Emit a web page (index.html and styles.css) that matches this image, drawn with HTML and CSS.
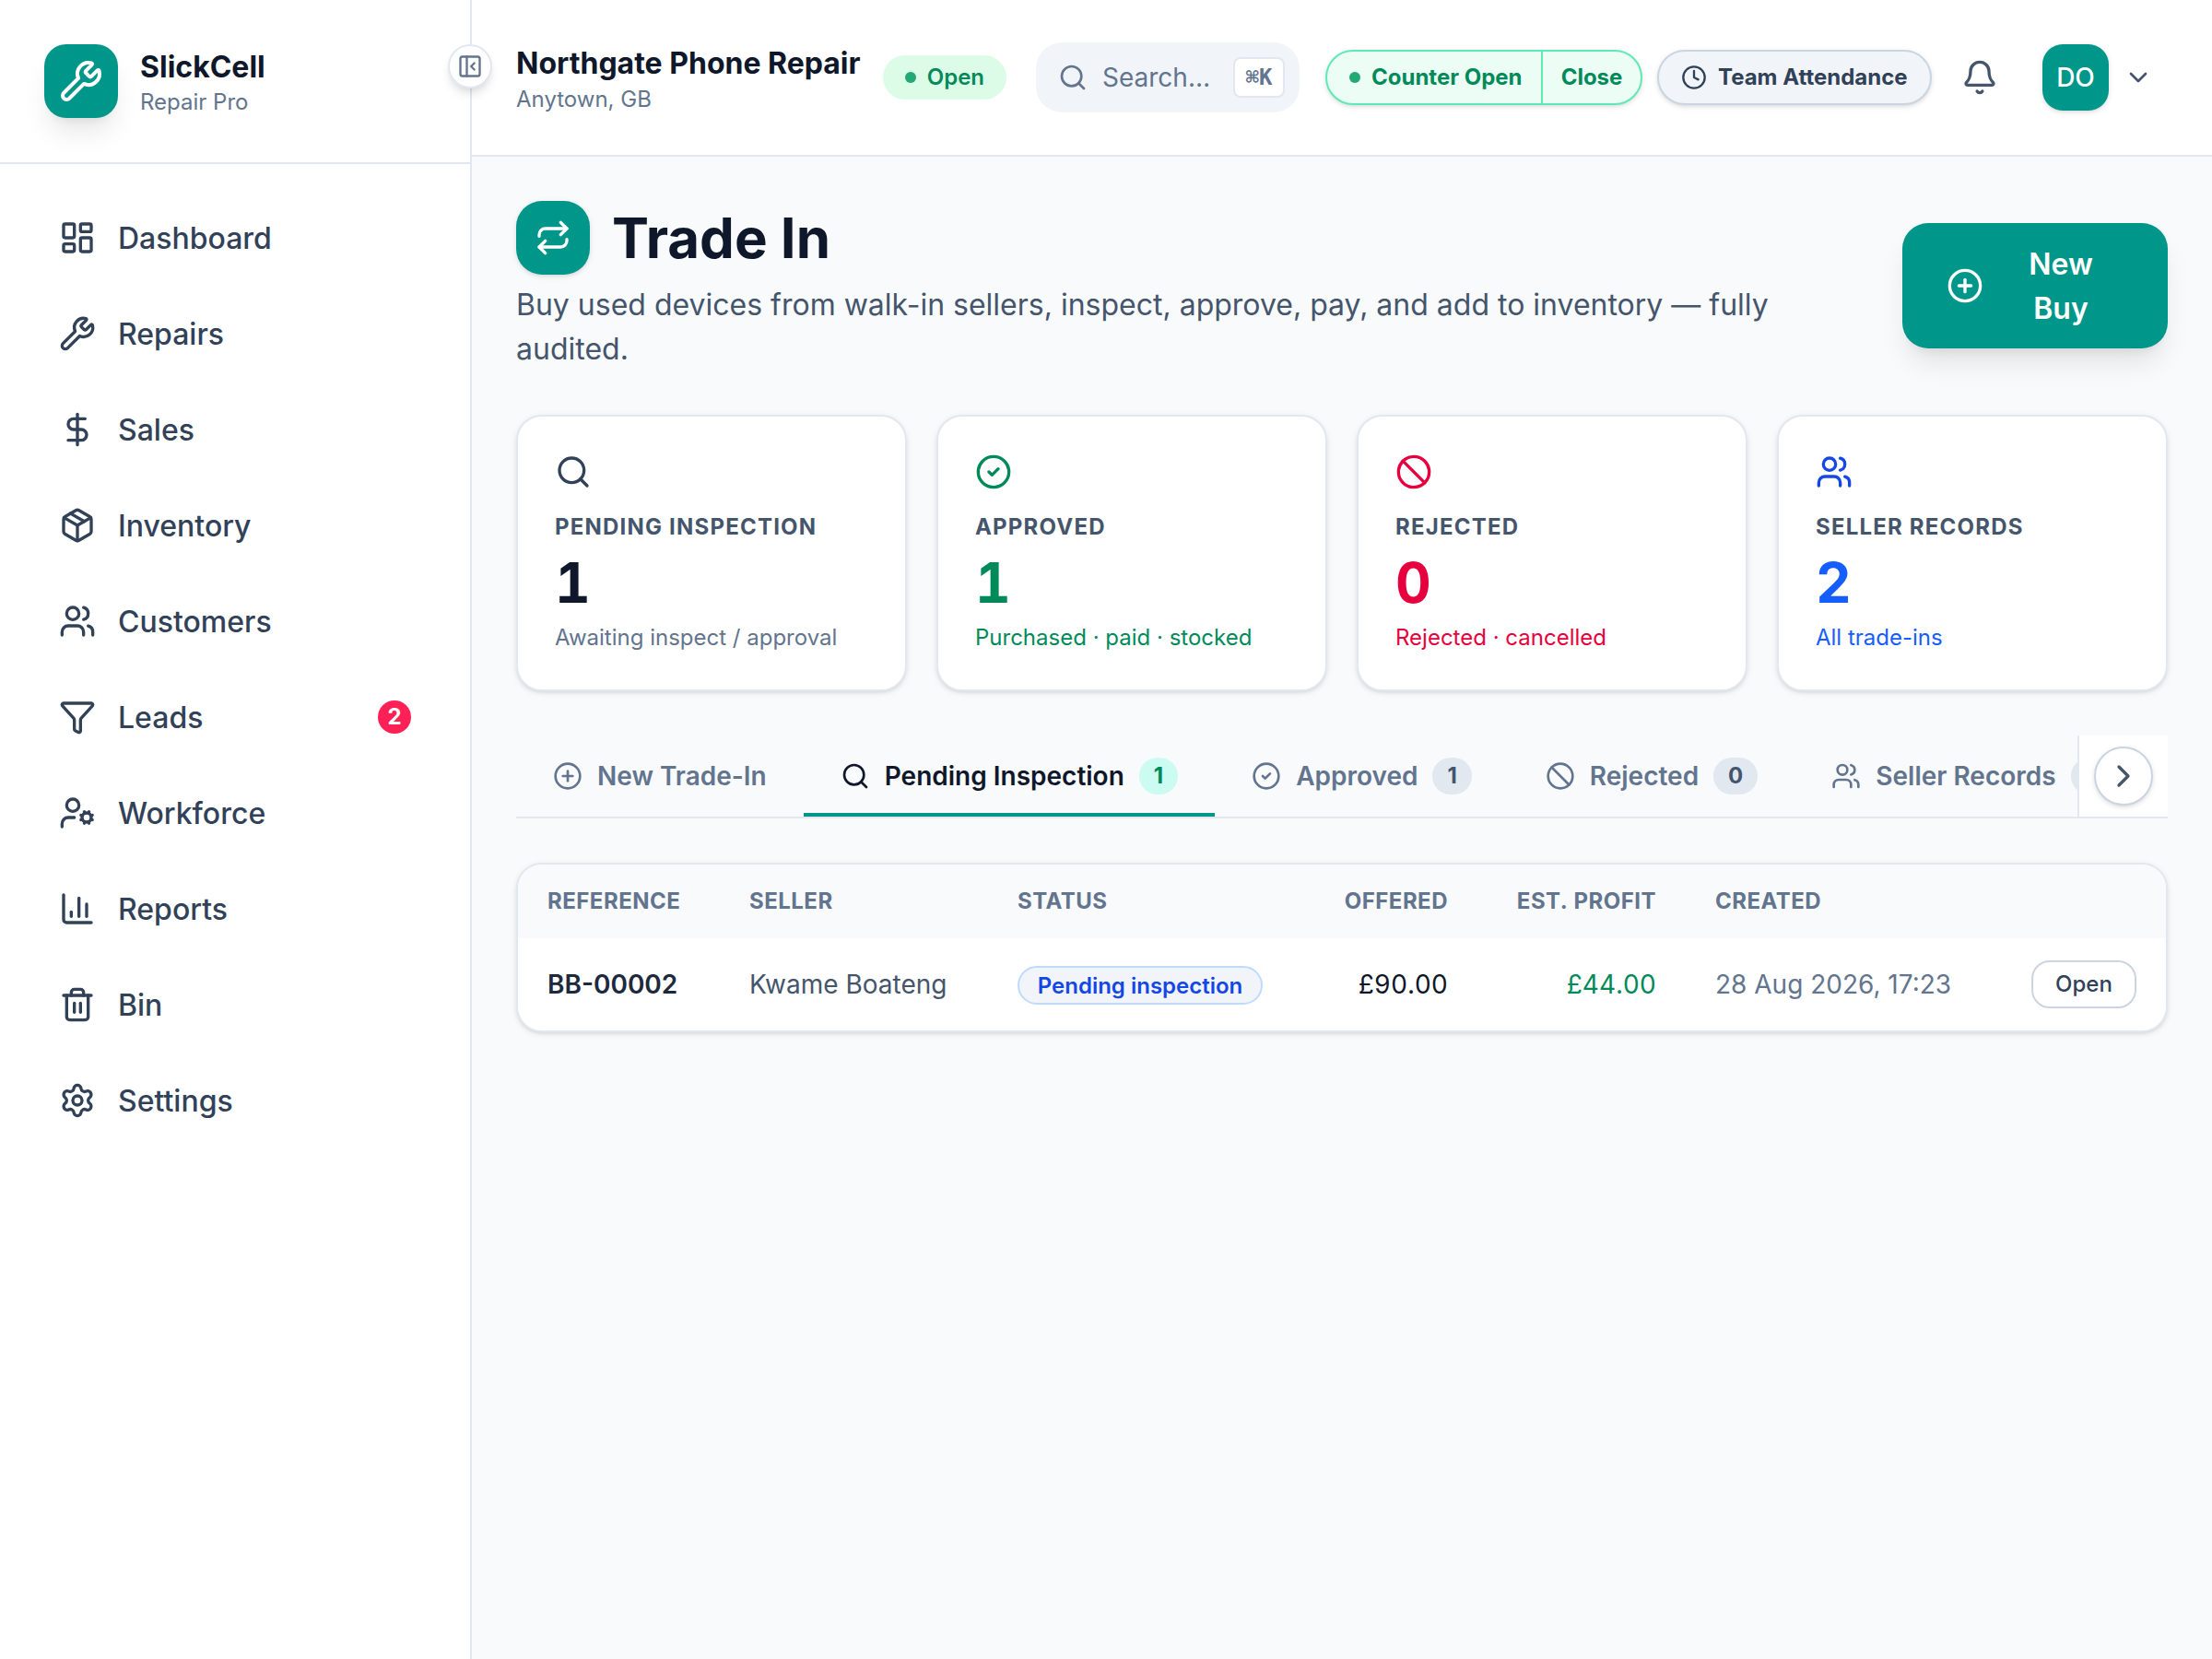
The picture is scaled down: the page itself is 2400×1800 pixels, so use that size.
FILE: index.html
```html
<!DOCTYPE html>
<html lang="en">
<head>
  <meta charset="UTF-8" />
  <meta name="viewport" content="width=device-width, initial-scale=1.0"/>
  <title>Trade In - SlickCell</title>
  <link rel="stylesheet" href="styles.css">
</head>
<body>
  <svg width="0" height="0" class="sprite">
    <symbol id="i-wrench" viewBox="0 0 24 24"><path d="M14.7 6.3a1 1 0 0 0 0 1.4l1.6 1.6a1 1 0 0 0 1.4 0l3.106-3.105c.32-.322.863-.22.983.218a6 6 0 0 1-8.259 7.057l-7.91 7.91a1 1 0 0 1-2.999-3l7.91-7.91a6 6 0 0 1 7.057-8.259c.438.12.54.662.219.984z"/></symbol>
    <symbol id="i-search" viewBox="0 0 24 24"><circle cx="11" cy="11" r="8"/><path d="m21 21-4.34-4.34"/></symbol>
    <symbol id="i-users" viewBox="0 0 24 24"><path d="M16 21v-2a4 4 0 0 0-4-4H6a4 4 0 0 0-4 4v2"/><path d="M16 3.128a4 4 0 0 1 0 7.744"/><path d="M22 21v-2a4 4 0 0 0-3-3.87"/><circle cx="9" cy="7" r="4"/></symbol>
    <symbol id="i-check" viewBox="0 0 24 24"><circle cx="12" cy="12" r="10"/><path d="m9 12 2 2 4-4"/></symbol>
    <symbol id="i-ban" viewBox="0 0 24 24"><circle cx="12" cy="12" r="10"/><path d="m4.9 4.9 14.2 14.2"/></symbol>
    <symbol id="i-plus" viewBox="0 0 24 24"><circle cx="12" cy="12" r="10"/><path d="M8 12h8"/><path d="M12 8v8"/></symbol>
  </svg>

  <div class="app">
    <aside class="sidebar">
      <div class="brand">
        <div class="brand-logo"><svg class="icon icon-lg"><use href="#i-wrench"/></svg></div>
        <div class="brand-text">
          <div class="brand-name">SlickCell</div>
          <div class="brand-sub">Repair Pro</div>
        </div>
      </div>
      <button class="collapse">
        <svg class="icon" viewBox="0 0 24 24"><rect width="18" height="18" x="3" y="3" rx="2"/><path d="M9 3v18"/><path d="m16 15-3-3 3-3"/></svg>
      </button>
      <nav class="nav">
        <a class="nav-item">
          <svg class="icon" viewBox="0 0 24 24"><rect width="7" height="9" x="3" y="3" rx="1"/><rect width="7" height="5" x="14" y="3" rx="1"/><rect width="7" height="9" x="14" y="12" rx="1"/><rect width="7" height="5" x="3" y="16" rx="1"/></svg>
          <span class="nav-label">Dashboard</span>
        </a>
        <a class="nav-item">
          <svg class="icon"><use href="#i-wrench"/></svg>
          <span class="nav-label">Repairs</span>
        </a>
        <a class="nav-item">
          <svg class="icon" viewBox="0 0 24 24"><path d="M12 2v20"/><path d="M17 5H9.5a3.5 3.5 0 0 0 0 7h5a3.5 3.5 0 0 1 0 7H6"/></svg>
          <span class="nav-label">Sales</span>
        </a>
        <a class="nav-item">
          <svg class="icon" viewBox="0 0 24 24"><path d="M11 21.73a2 2 0 0 0 2 0l7-4A2 2 0 0 0 21 16V8a2 2 0 0 0-1-1.73l-7-4a2 2 0 0 0-2 0l-7 4A2 2 0 0 0 3 8v8a2 2 0 0 0 1 1.73z"/><path d="M12 22V12"/><path d="M3.29 7 12 12l8.71-5"/><path d="m7.5 4.27 9 5.15"/></svg>
          <span class="nav-label">Inventory</span>
        </a>
        <a class="nav-item">
          <svg class="icon"><use href="#i-users"/></svg>
          <span class="nav-label">Customers</span>
        </a>
        <a class="nav-item">
          <svg class="icon" viewBox="0 0 24 24"><path d="M10 20a1 1 0 0 0 .553.895l2 1A1 1 0 0 0 14 21v-7a2 2 0 0 1 .517-1.341L21.74 4.67A1 1 0 0 0 21 3H3a1 1 0 0 0-.742 1.67l7.225 7.989A2 2 0 0 1 10 14z"/></svg>
          <span class="nav-label">Leads</span>
          <span class="nav-badge">2</span>
        </a>
        <a class="nav-item">
          <svg class="icon" viewBox="0 0 24 24"><path d="M10 15H6a4 4 0 0 0-4 4v2"/><path d="m14.305 16.53.923-.382"/><path d="m15.228 13.852-.923-.383"/><path d="m16.852 12.228-.383-.923"/><path d="m16.852 17.772-.383.924"/><path d="m19.148 12.228.383-.923"/><path d="m19.53 18.696-.382-.924"/><path d="m20.772 13.852.924-.383"/><path d="m20.772 16.148.924.383"/><circle cx="18" cy="15" r="3"/><circle cx="9" cy="7" r="4"/></svg>
          <span class="nav-label">Workforce</span>
        </a>
        <a class="nav-item">
          <svg class="icon" viewBox="0 0 24 24"><path d="M3 3v16a2 2 0 0 0 2 2h16"/><path d="M18 17V9"/><path d="M13 17V5"/><path d="M8 17v-3"/></svg>
          <span class="nav-label">Reports</span>
        </a>
        <a class="nav-item">
          <svg class="icon" viewBox="0 0 24 24"><path d="M10 11v6"/><path d="M14 11v6"/><path d="M19 6v14a2 2 0 0 1-2 2H7a2 2 0 0 1-2-2V6"/><path d="M3 6h18"/><path d="M8 6V4a2 2 0 0 1 2-2h4a2 2 0 0 1 2 2v2"/></svg>
          <span class="nav-label">Bin</span>
        </a>
        <a class="nav-item">
          <svg class="icon" viewBox="0 0 24 24"><path d="M9.671 4.136a2.34 2.34 0 0 1 4.659 0 2.34 2.34 0 0 0 3.319 1.915 2.34 2.34 0 0 1 2.33 4.033 2.34 2.34 0 0 0 0 3.831 2.34 2.34 0 0 1-2.33 4.033 2.34 2.34 0 0 0-3.319 1.915 2.34 2.34 0 0 1-4.659 0 2.34 2.34 0 0 0-3.32-1.915 2.34 2.34 0 0 1-2.33-4.033 2.34 2.34 0 0 0 0-3.831A2.34 2.34 0 0 1 6.35 6.051a2.34 2.34 0 0 0 3.319-1.915"/><circle cx="12" cy="12" r="3"/></svg>
          <span class="nav-label">Settings</span>
        </a>
      </nav>
    </aside>

    <div class="content">
      <header class="topbar">
        <div class="shop">
          <div class="shop-name">Northgate Phone Repair</div>
          <div class="shop-place">Anytown, GB</div>
        </div>
        <span class="open-pill"><i class="dot"></i>Open</span>
        <button class="search">
          <svg class="icon icon-sm"><use href="#i-search"/></svg>
          <span class="search-text">Search…</span>
          <kbd>⌘K</kbd>
        </button>
        <div class="counter">
          <span class="counter-state"><i class="dot"></i>Counter Open</span>
          <button class="counter-close">Close</button>
        </div>
        <button class="attendance">
          <svg class="icon" viewBox="0 0 24 24"><circle cx="12" cy="12" r="10"/><path d="M12 6v6l4 2"/></svg>
          Team Attendance
        </button>
        <button class="bell">
          <svg class="icon" viewBox="0 0 24 24"><path d="M10.268 21a2 2 0 0 0 3.464 0"/><path d="M3.262 15.326A1 1 0 0 0 4 17h16a1 1 0 0 0 .74-1.673C19.41 13.956 18 12.499 18 8A6 6 0 0 0 6 8c0 4.499-1.411 5.956-2.738 7.326"/></svg>
        </button>
        <button class="account">
          <span class="avatar">DO</span>
          <svg class="icon icon-sm" viewBox="0 0 24 24"><path d="m6 9 6 6 6-6"/></svg>
        </button>
      </header>

      <main class="main">
        <section class="page-head">
          <div class="page-intro">
            <div class="page-title">
              <div class="page-icon">
                <svg class="icon" viewBox="0 0 24 24"><path d="m17 2 4 4-4 4"/><path d="M3 11v-1a4 4 0 0 1 4-4h14"/><path d="m7 22-4-4 4-4"/><path d="M21 13v1a4 4 0 0 1-4 4H3"/></svg>
              </div>
              <h1>Trade In</h1>
            </div>
            <p>Buy used devices from walk-in sellers, inspect, approve, pay, and add to inventory — fully audited.</p>
          </div>
          <button class="new-buy">
            <svg class="icon"><use href="#i-plus"/></svg>
            <span>New Buy</span>
          </button>
        </section>

        <section class="stats">
          <div class="card">
            <svg class="icon"><use href="#i-search"/></svg>
            <div class="card-label">Pending Inspection</div>
            <div class="card-value">1</div>
            <div class="card-note">Awaiting inspect / approval</div>
          </div>
          <div class="card card-green">
            <svg class="icon"><use href="#i-check"/></svg>
            <div class="card-label">Approved</div>
            <div class="card-value">1</div>
            <div class="card-note">Purchased · paid · stocked</div>
          </div>
          <div class="card card-red">
            <svg class="icon"><use href="#i-ban"/></svg>
            <div class="card-label">Rejected</div>
            <div class="card-value">0</div>
            <div class="card-note">Rejected · cancelled</div>
          </div>
          <div class="card card-blue">
            <svg class="icon"><use href="#i-users"/></svg>
            <div class="card-label">Seller Records</div>
            <div class="card-value">2</div>
            <div class="card-note">All trade-ins</div>
          </div>
        </section>

        <div class="tabs">
          <div class="tab-list">
            <button class="tab"><svg class="icon icon-sm"><use href="#i-plus"/></svg>New Trade-In</button>
            <button class="tab active"><svg class="icon icon-sm"><use href="#i-search"/></svg>Pending Inspection<span class="count">1</span></button>
            <button class="tab"><svg class="icon icon-sm"><use href="#i-check"/></svg>Approved<span class="count">1</span></button>
            <button class="tab"><svg class="icon icon-sm"><use href="#i-ban"/></svg>Rejected<span class="count">0</span></button>
            <button class="tab"><svg class="icon icon-sm"><use href="#i-users"/></svg>Seller Records<span class="count">2</span></button>
          </div>
          <div class="tab-scroll">
            <button><svg class="icon" viewBox="0 0 24 24"><path d="m9 18 6-6-6-6"/></svg></button>
          </div>
        </div>

        <div class="table-card">
          <table>
            <colgroup>
              <col class="c-ref"><col class="c-seller"><col class="c-status"><col class="c-offered"><col class="c-profit"><col class="c-created"><col>
            </colgroup>
            <thead>
              <tr>
                <th>Reference</th>
                <th>Seller</th>
                <th>Status</th>
                <th class="num">Offered</th>
                <th class="num">Est. Profit</th>
                <th>Created</th>
                <th></th>
              </tr>
            </thead>
            <tbody>
              <tr>
                <td class="ref">BB-00002</td>
                <td class="seller">Kwame Boateng</td>
                <td><span class="status">Pending inspection</span></td>
                <td class="num">£90.00</td>
                <td class="num profit">£44.00</td>
                <td class="created">28 Aug 2026, 17:23</td>
                <td class="num"><button class="row-open">Open</button></td>
              </tr>
            </tbody>
          </table>
        </div>
      </main>
    </div>
  </div>
</body>
</html>
```

FILE: styles.css
```css
* {
  box-sizing: border-box;
}

body {
  margin: 0;
  font-family: Inter, "Liberation Sans", sans-serif;
  font-size: 28px;
  line-height: 1.5;
  color: #0f172b;
  background: #f8fafc;
}

button {
  margin: 0;
  padding: 0;
  border: none;
  background: none;
  font: inherit;
  color: inherit;
  cursor: pointer;
}

.sprite {
  position: absolute;
}

.icon {
  width: 40px;
  height: 40px;
  flex-shrink: 0;
  display: block;
  fill: none;
  stroke: currentColor;
  stroke-width: 2;
  stroke-linecap: round;
  stroke-linejoin: round;
}

.icon-sm {
  width: 32px;
  height: 32px;
}

.icon-lg {
  width: 48px;
  height: 48px;
}

.app {
  display: flex;
  height: 1800px;
}

/* sidebar */
.sidebar {
  position: relative;
  width: 512px;
  flex-shrink: 0;
  background: #fff;
  border-right: 2px solid #e2e8f0;
}

.brand {
  display: flex;
  align-items: center;
  gap: 24px;
  height: 178px;
  padding: 0 48px;
  border-bottom: 2px solid #e2e8f0;
}

.brand-logo {
  width: 80px;
  height: 80px;
  display: flex;
  align-items: center;
  justify-content: center;
  border-radius: 24px;
  background: #009689;
  color: #fff;
  box-shadow: 0 20px 30px -6px rgba(0, 0, 0, 0.1), 0 8px 12px -8px rgba(0, 0, 0, 0.1);
}

.brand-text {
  padding-top: 6px;
}

.brand-name {
  font-size: 32px;
  line-height: 40px;
  font-weight: 700;
}

.brand-sub {
  font-size: 24px;
  line-height: 36px;
  color: #62748e;
}

.collapse {
  position: absolute;
  top: 48px;
  right: -24px;
  width: 48px;
  height: 48px;
  display: flex;
  align-items: center;
  justify-content: center;
  border: 2px solid #e2e8f0;
  border-radius: 50%;
  background: #fff;
  color: #62748e;
  box-shadow: 0 8px 12px -2px rgba(0, 0, 0, 0.1), 0 4px 8px -4px rgba(0, 0, 0, 0.1);
}

.collapse .icon {
  width: 28px;
  height: 28px;
}

.nav {
  display: flex;
  flex-direction: column;
  gap: 8px;
  padding: 32px;
}

.nav-item {
  display: flex;
  align-items: center;
  gap: 24px;
  height: 96px;
  padding: 0 32px;
  font-size: 32px;
  font-weight: 500;
  color: #314158;
}

.nav-label {
  padding-top: 2px;
}

.nav-badge {
  width: 36px;
  height: 36px;
  margin-left: auto;
  border-radius: 50%;
  background: #ff2056;
  color: #fff;
  font-size: 24px;
  line-height: 36px;
  font-weight: 700;
  text-align: center;
}

/* top bar */
.content {
  flex: 1;
  min-width: 0;
}

.topbar {
  display: flex;
  align-items: center;
  height: 170px;
  padding: 0 64px 0 48px;
  background: #fff;
  border-bottom: 2px solid #e2e8f0;
  font-size: 24px;
  font-weight: 700;
  white-space: nowrap;
}

.shop {
  width: 374px;
  margin-right: 24px;
  padding-top: 8px;
}

.shop-name {
  font-size: 32px;
  line-height: 40px;
  font-weight: 700;
}

.shop-place {
  line-height: 38px;
  font-weight: 400;
  color: #62748e;
}

.dot {
  width: 12px;
  height: 12px;
  border-radius: 50%;
  background: #22a975;
}

.open-pill {
  display: flex;
  align-items: center;
  gap: 12px;
  width: 134px;
  height: 48px;
  padding: 0 24px;
  border-radius: 24px;
  background: #dcfce7;
  color: #008a5a;
  font-weight: 600;
}

.search {
  display: flex;
  align-items: center;
  width: 286px;
  height: 76px;
  margin-left: 32px;
  padding: 0 16px 0 24px;
  border-radius: 28px;
  background: #f1f5f9;
  color: #62748e;
}

.search-text {
  margin-left: 16px;
  font-size: 28px;
  font-weight: 400;
}

kbd {
  width: 56px;
  height: 44px;
  margin-left: auto;
  border: 2px solid #e2e8f0;
  border-radius: 8px;
  background: #fff;
  font-family: "DejaVu Sans Mono", monospace;
  font-size: 24px;
  line-height: 40px;
  font-weight: 600;
}

.counter {
  display: flex;
  height: 60px;
  width: 344px;
  margin-left: 28px;
  border: 2px solid #5ee9b5;
  border-radius: 30px;
  background: #ecfdf5;
  color: #008a5a;
  box-shadow: 0 2px 6px rgba(0, 0, 0, 0.1), 0 2px 4px -2px rgba(0, 0, 0, 0.1);
}

.counter-state {
  display: flex;
  align-items: center;
  gap: 12px;
  width: 232px;
  padding-left: 24px;
}

.counter-close {
  flex: 1;
  border-left: 2px solid #5ee9b5;
}

.attendance {
  display: flex;
  align-items: center;
  gap: 12px;
  width: 298px;
  height: 60px;
  margin-left: 16px;
  padding: 0 24px;
  border: 2px solid #cad5e2;
  border-radius: 30px;
  background: #f1f5f9;
  color: #314158;
  box-shadow: 0 2px 6px rgba(0, 0, 0, 0.1), 0 2px 4px -2px rgba(0, 0, 0, 0.1);
}

.attendance .icon {
  width: 28px;
  height: 28px;
}

.bell {
  margin-left: 32px;
  color: #45556c;
}

.account {
  display: flex;
  align-items: center;
  gap: 16px;
  margin-left: auto;
  color: #45556c;
}

.avatar {
  width: 72px;
  height: 72px;
  border-radius: 22px;
  background: #009689;
  color: #fff;
  font-size: 28px;
  line-height: 72px;
  font-weight: 500;
  box-shadow: 0 2px 6px rgba(0, 0, 0, 0.1), 0 2px 4px -2px rgba(0, 0, 0, 0.1);
}

/* page */
.main {
  display: flex;
  flex-direction: column;
  gap: 48px;
  padding: 48px;
}

.page-head {
  display: flex;
  align-items: center;
  gap: 32px;
}

.page-intro {
  flex: 1;
}

.page-title {
  display: flex;
  align-items: center;
  gap: 24px;
}

.page-icon {
  width: 80px;
  height: 80px;
  display: flex;
  align-items: center;
  justify-content: center;
  border-radius: 28px;
  background: #009689;
  color: #fff;
  box-shadow: 0 2px 6px rgba(0, 0, 0, 0.1), 0 2px 4px -2px rgba(0, 0, 0, 0.1);
}

h1 {
  margin: 0;
  font-size: 60px;
  line-height: 72px;
  font-weight: 700;
}

.page-intro p {
  margin: 9px 0 -1px;
  font-size: 32px;
  line-height: 48px;
  color: #45556c;
}

.new-buy {
  display: flex;
  align-items: center;
  gap: 16px;
  width: 288px;
  height: 136px;
  padding: 0 48px;
  border-radius: 28px;
  background: #009689;
  color: #fff;
  font-size: 32px;
  line-height: 48px;
  font-weight: 600;
  box-shadow: 0 20px 30px -6px rgba(0, 0, 0, 0.1), 0 8px 12px -8px rgba(0, 0, 0, 0.1);
}

.new-buy span {
  flex: 1;
  padding-top: 2px;
}

.stats {
  display: grid;
  grid-template-columns: repeat(4, 1fr);
  gap: 32px;
}

.card {
  height: 300px;
  padding: 40px;
  border: 2px solid #e2e8f0;
  border-radius: 28px;
  background: #fff;
  box-shadow: 0 2px 6px rgba(0, 0, 0, 0.1), 0 2px 4px -2px rgba(0, 0, 0, 0.1);
}

.card .icon {
  color: #314158;
}

.card-label {
  margin-top: 24px;
  font-size: 24px;
  line-height: 32px;
  font-weight: 700;
  letter-spacing: 0.05em;
  text-transform: uppercase;
  color: #45556c;
}

.card-value {
  margin-top: 8px;
  font-size: 60px;
  line-height: 72px;
  font-weight: 700;
  font-variant-numeric: tabular-nums;
}

.card-note {
  margin-top: 8px;
  font-size: 24px;
  line-height: 32px;
  color: #62748e;
}

.card-green .icon,
.card-green .card-value,
.card-green .card-note {
  color: #008a5a;
}

.card-red .icon,
.card-red .card-value,
.card-red .card-note {
  color: #e7003e;
}

.card-blue .icon {
  color: #1447e6;
}

.card-blue .card-value,
.card-blue .card-note {
  color: #155dfc;
}

/* tabs */
.tabs {
  display: flex;
  height: 90px;
  border-bottom: 2px solid #e2e8f0;
}

.tab-list {
  display: flex;
  flex: 1;
  min-width: 0;
  overflow: hidden;
}

.tab {
  display: flex;
  align-items: center;
  gap: 16px;
  flex-shrink: 0;
  padding: 4px 40px 0;
  border-bottom: 4px solid transparent;
  font-weight: 600;
  white-space: nowrap;
  color: #62748e;
}

.tab.active {
  border-color: #009689;
  color: #0f172b;
}

.count {
  height: 40px;
  padding: 0 16px;
  border-radius: 20px;
  background: #e2e8f0;
  color: #45556c;
  font-size: 24px;
  line-height: 40px;
  font-weight: 700;
}

.active .count {
  background: #cbfbf1;
  color: #008a5a;
}

.tab-scroll {
  width: 98px;
  padding: 12px 16px;
  border-left: 2px solid #e2e8f0;
  background: #fff;
}

.tab-scroll button {
  width: 64px;
  height: 64px;
  display: flex;
  align-items: center;
  justify-content: center;
  border: 2px solid #cad5e2;
  border-radius: 50%;
  background: #fff;
  color: #45556c;
  box-shadow: 0 2px 6px rgba(0, 0, 0, 0.1), 0 2px 4px -2px rgba(0, 0, 0, 0.1);
}

/* table */
.table-card {
  overflow: hidden;
  border: 2px solid #e2e8f0;
  border-radius: 28px;
  background: #fff;
  box-shadow: 0 2px 6px rgba(0, 0, 0, 0.1), 0 2px 4px -2px rgba(0, 0, 0, 0.1);
}

table {
  width: 100%;
  table-layout: fixed;
  border-collapse: collapse;
}

.c-ref { width: 219px; }
.c-seller { width: 291px; }
.c-status { width: 331px; }
.c-offered { width: 200px; }
.c-profit { width: 226px; }
.c-created { width: 322px; }

th,
td {
  padding: 0 32px;
  text-align: left;
  white-space: nowrap;
}

th {
  height: 80px;
  background: #f8fafc;
  font-size: 24px;
  font-weight: 700;
  letter-spacing: 0.02em;
  text-transform: uppercase;
  color: #62748e;
}

td {
  height: 100px;
}

.num {
  text-align: right;
  font-variant-numeric: tabular-nums;
}

.ref {
  font-weight: 600;
  color: #1d293d;
}

.seller {
  color: #45556c;
}

.profit {
  color: #008a5a;
}

.created {
  color: #62748e;
}

.status {
  display: inline-block;
  width: 266px;
  height: 42px;
  border: 2px solid #bedbff;
  border-radius: 21px;
  background: #f1f5f9;
  font-size: 24px;
  line-height: 39px;
  font-weight: 600;
  text-align: center;
  vertical-align: middle;
  color: #1447e6;
}

.row-open {
  width: 114px;
  height: 52px;
  border: 2px solid #cad5e2;
  border-radius: 20px;
  font-size: 24px;
  line-height: 46px;
  font-weight: 500;
  vertical-align: middle;
  color: #314158;
}
```
